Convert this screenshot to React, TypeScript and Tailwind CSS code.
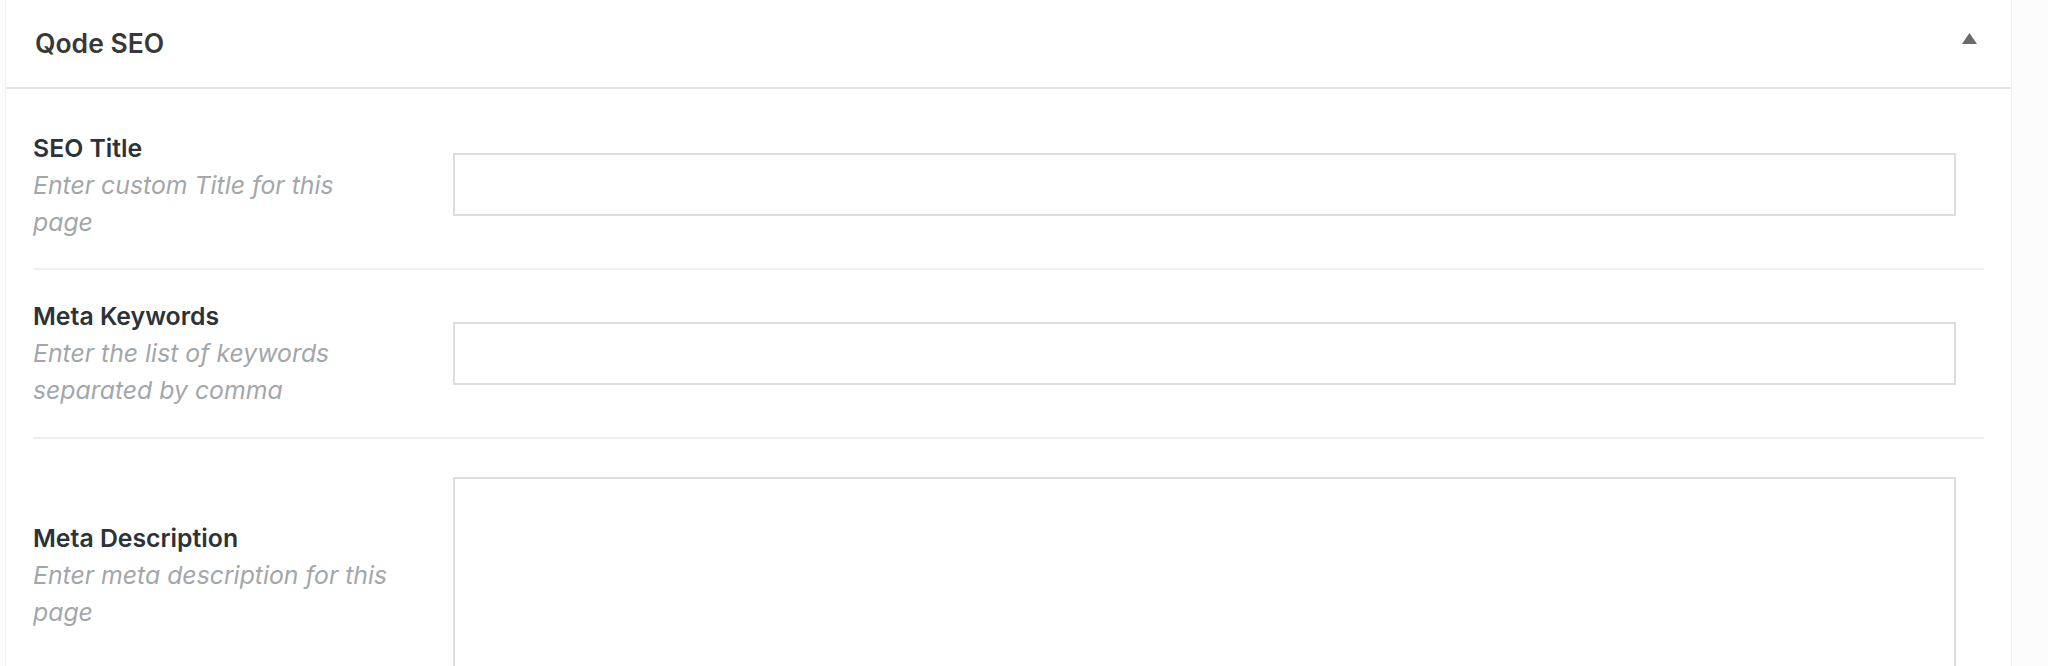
export default function App() {
  const fields = [
    { label: "SEO Title", desc: ["Enter custom Title for this", "page"], kind: "input", pad: "pt-[38px] pb-[27px]", textPad: "pt-[3px]" },
    { label: "Meta Keywords", desc: ["Enter the list of keywords", "separated by comma"], kind: "input", pad: "py-[28px]", textPad: "" },
    { label: "Meta Description", desc: ["Enter meta description for this", "page"], kind: "textarea", pad: "pt-[38px] pb-[28px]", textPad: "" },
  ];

  return (
    <div
      className="w-full h-[666px] overflow-hidden bg-[#fcfcfc]"
      style={{ fontFamily: "Inter, 'Noto Sans', sans-serif" }}
    >
      <div className="ml-[5px] w-[2007px] bg-white border-x border-[#f2f2f2] min-h-[666px]">
        {/* Header */}
        <div className="h-[89px] flex items-center justify-between pl-[29px] pr-[34px] border-b-2 border-[#e5e5e5]">
          <h2 className="text-[26.5px] font-semibold text-[#383838] leading-none">Qode SEO</h2>
          <svg width="15" height="11" viewBox="0 0 15 11" className="mb-[10px]">
            <polygon points="7.5,0 15,11 0,11" fill="#6b6b6b" />
          </svg>
        </div>

        {/* Fields */}
        <div className="px-[27px]">
          {fields.map((f, i) => (
            <div
              key={f.label}
              className={`flex items-center ${f.pad} ${i < fields.length - 1 ? "border-b-2 border-[#efefef]" : ""}`}
            >
              <div className={`w-[420px] shrink-0 text-[24.8px] leading-[37px] ${f.textPad}`}>
                <div className="font-semibold text-[#2c3338]">{f.label}</div>
                {f.desc.map((d) => (
                  <div key={d} className="italic text-[#a3a7ab]">
                    {d}
                  </div>
                ))}
              </div>
              {f.kind === "input" ? (
                <input
                  type="text"
                  className="w-[1503px] h-[63px] border-2 border-[#dddddd] bg-white outline-none"
                />
              ) : (
                <textarea className="w-[1503px] h-[196px] border-2 border-[#dddddd] bg-white outline-none resize-none" />
              )}
            </div>
          ))}
        </div>
      </div>
    </div>
  );
}
